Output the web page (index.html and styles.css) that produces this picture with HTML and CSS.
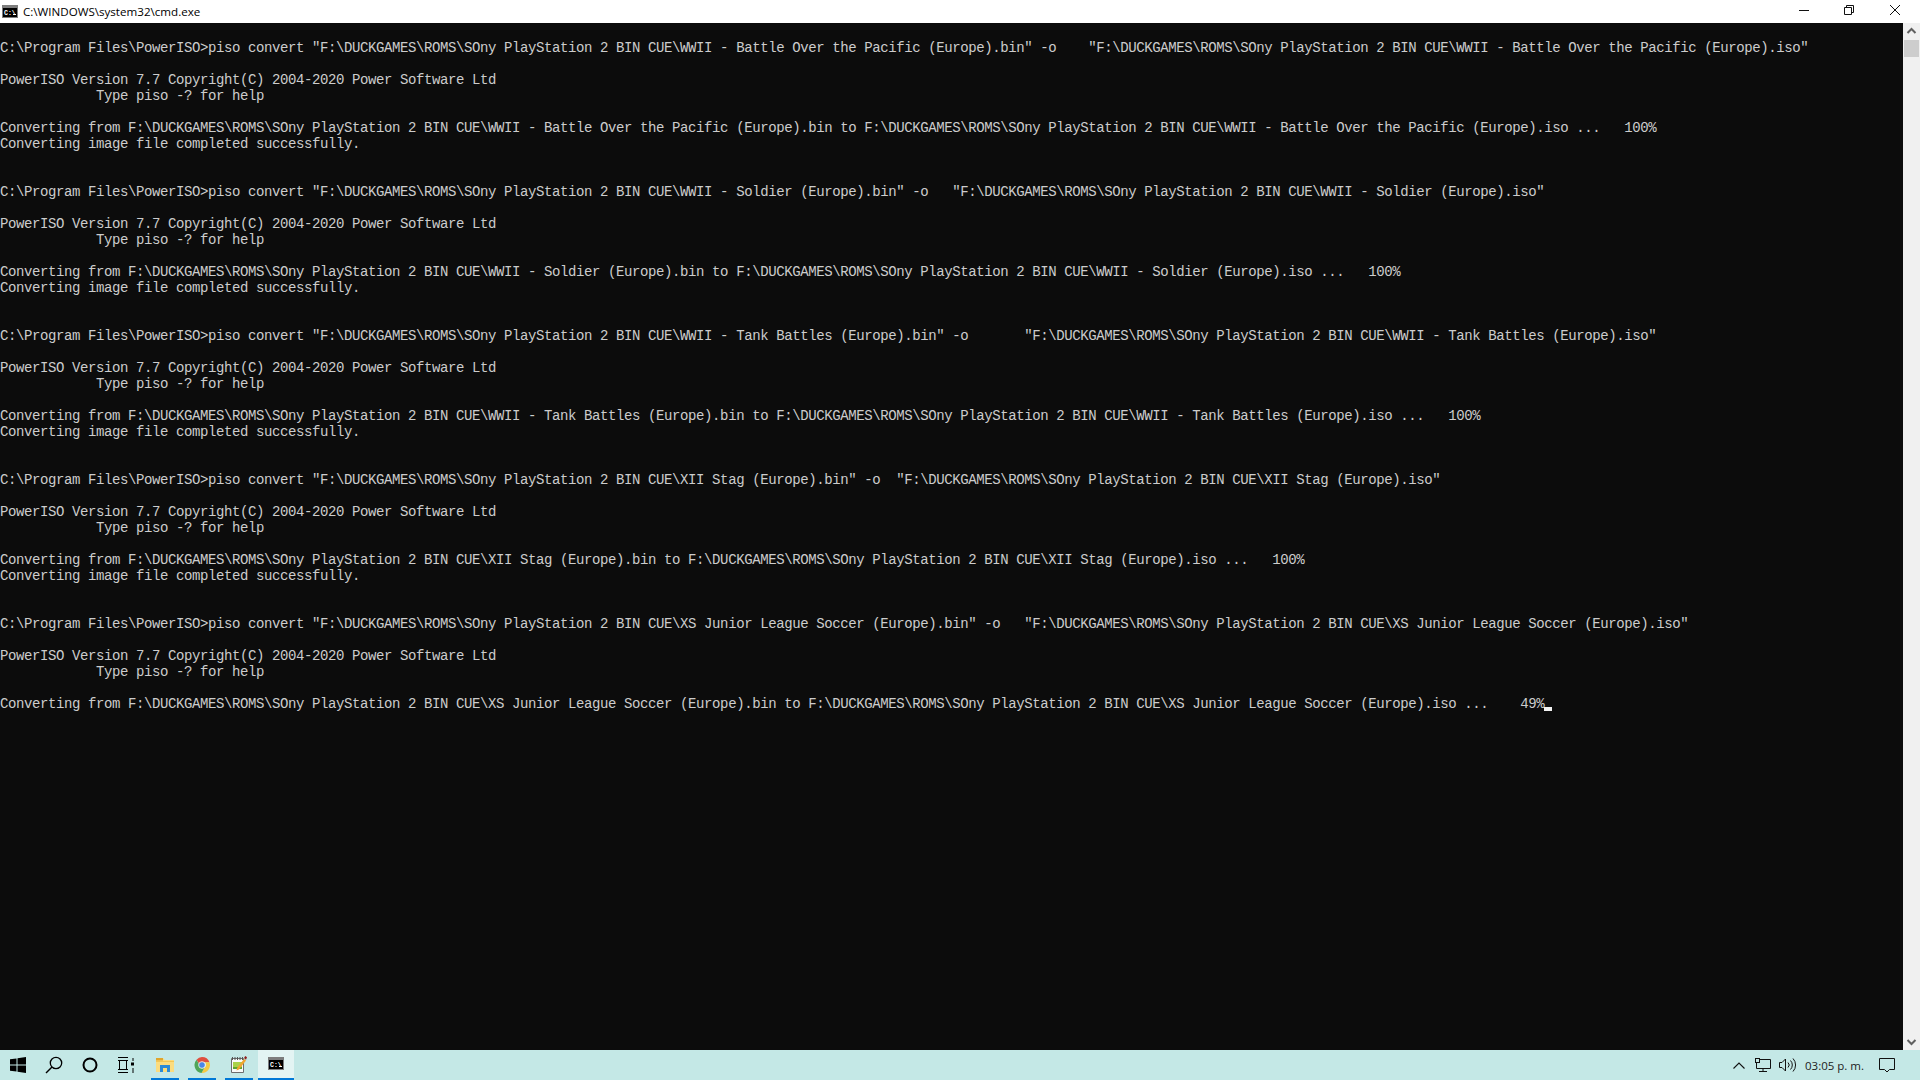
FILE: index.html
```html
<!DOCTYPE html>
<html lang="en">
<head>
<meta charset="utf-8">
<title>C:\WINDOWS\system32\cmd.exe</title>
<link rel="stylesheet" href="styles.css">
</head>
<body>
<div class="screen">
  <header class="titlebar">
    <svg class="app-icon" width="16" height="13" viewBox="0 0 16 13"><rect width="16" height="13" fill="#7d7d7d"/><rect x="1" y="3" width="14" height="9" fill="#000"/><text x="2" y="10" class="app-icon-text">C:\</text><rect x="11" y="9" width="3" height="1" fill="#fff"/></svg>
    <span class="title">C:\WINDOWS\system32\cmd.exe</span>
    <div class="window-controls">
      <svg class="ctl ctl-min" width="46" height="16" viewBox="0 0 46 16"><path d="M18 10.5h10" stroke="#111" fill="none"/></svg>
      <svg class="ctl ctl-max" width="46" height="16" viewBox="0 0 46 16"><path d="M17.5 7.500h7v7h-7zM19.500 7.500v-2h7v7h-2" stroke="#111" fill="none"/></svg>
      <svg class="ctl ctl-close" width="46" height="16" viewBox="0 0 46 16"><path d="M17 5l10 10M27 5l-10 10" stroke="#111" fill="none"/></svg>
    </div>
  </header>
  <main class="console">
<pre class="output">

C:\Program Files\PowerISO&gt;piso convert "F:\DUCKGAMES\ROMS\SOny PlayStation 2 BIN CUE\WWII - Battle Over the Pacific (Europe).bin" -o    "F:\DUCKGAMES\ROMS\SOny PlayStation 2 BIN CUE\WWII - Battle Over the Pacific (Europe).iso"

PowerISO Version 7.7 Copyright(C) 2004-2020 Power Software Ltd
            Type piso -? for help

Converting from F:\DUCKGAMES\ROMS\SOny PlayStation 2 BIN CUE\WWII - Battle Over the Pacific (Europe).bin to F:\DUCKGAMES\ROMS\SOny PlayStation 2 BIN CUE\WWII - Battle Over the Pacific (Europe).iso ...   100%
Converting image file completed successfully.


C:\Program Files\PowerISO&gt;piso convert "F:\DUCKGAMES\ROMS\SOny PlayStation 2 BIN CUE\WWII - Soldier (Europe).bin" -o   "F:\DUCKGAMES\ROMS\SOny PlayStation 2 BIN CUE\WWII - Soldier (Europe).iso"

PowerISO Version 7.7 Copyright(C) 2004-2020 Power Software Ltd
            Type piso -? for help

Converting from F:\DUCKGAMES\ROMS\SOny PlayStation 2 BIN CUE\WWII - Soldier (Europe).bin to F:\DUCKGAMES\ROMS\SOny PlayStation 2 BIN CUE\WWII - Soldier (Europe).iso ...   100%
Converting image file completed successfully.


C:\Program Files\PowerISO&gt;piso convert "F:\DUCKGAMES\ROMS\SOny PlayStation 2 BIN CUE\WWII - Tank Battles (Europe).bin" -o       "F:\DUCKGAMES\ROMS\SOny PlayStation 2 BIN CUE\WWII - Tank Battles (Europe).iso"

PowerISO Version 7.7 Copyright(C) 2004-2020 Power Software Ltd
            Type piso -? for help

Converting from F:\DUCKGAMES\ROMS\SOny PlayStation 2 BIN CUE\WWII - Tank Battles (Europe).bin to F:\DUCKGAMES\ROMS\SOny PlayStation 2 BIN CUE\WWII - Tank Battles (Europe).iso ...   100%
Converting image file completed successfully.


C:\Program Files\PowerISO&gt;piso convert "F:\DUCKGAMES\ROMS\SOny PlayStation 2 BIN CUE\XII Stag (Europe).bin" -o  "F:\DUCKGAMES\ROMS\SOny PlayStation 2 BIN CUE\XII Stag (Europe).iso"

PowerISO Version 7.7 Copyright(C) 2004-2020 Power Software Ltd
            Type piso -? for help

Converting from F:\DUCKGAMES\ROMS\SOny PlayStation 2 BIN CUE\XII Stag (Europe).bin to F:\DUCKGAMES\ROMS\SOny PlayStation 2 BIN CUE\XII Stag (Europe).iso ...   100%
Converting image file completed successfully.


C:\Program Files\PowerISO&gt;piso convert "F:\DUCKGAMES\ROMS\SOny PlayStation 2 BIN CUE\XS Junior League Soccer (Europe).bin" -o   "F:\DUCKGAMES\ROMS\SOny PlayStation 2 BIN CUE\XS Junior League Soccer (Europe).iso"

PowerISO Version 7.7 Copyright(C) 2004-2020 Power Software Ltd
            Type piso -? for help

Converting from F:\DUCKGAMES\ROMS\SOny PlayStation 2 BIN CUE\XS Junior League Soccer (Europe).bin to F:\DUCKGAMES\ROMS\SOny PlayStation 2 BIN CUE\XS Junior League Soccer (Europe).iso ...    49%<span class="cursor"></span></pre>
    <div class="scrollbar">
      <svg class="arrow" width="17" height="17" viewBox="0 0 17 17"><path d="M4.500 10l4-4 4 4" stroke="#606060" stroke-width="2" fill="none"/></svg>
      <div class="track"><div class="thumb"></div></div>
      <svg class="arrow" width="17" height="17" viewBox="0 0 17 17"><path d="M4.500 7l4 4 4-4" stroke="#606060" stroke-width="2" fill="none"/></svg>
    </div>
  </main>
  <footer class="taskbar">
    <div class="tool"><svg width="16" height="16" viewBox="0 0 16 16"><path d="M0 2.300 6.500 1.400V7.500H0zM7.500 1.200 16 0V7.500H7.500zM0 8.500H6.500V14.600L0 13.700zM7.500 8.500H16V16L7.500 14.800z" fill="#000"/></svg></div>
    <div class="tool"><svg width="18" height="18" viewBox="0 0 18 18"><circle cx="11" cy="7" r="5.700" stroke="#000" stroke-width="1.300" fill="none"/><path d="M7 11 1 17" stroke="#000" stroke-width="1.400" fill="none"/></svg></div>
    <div class="tool"><svg width="16" height="16" viewBox="0 0 16 16"><circle cx="8" cy="8" r="6.500" stroke="#000" stroke-width="2" fill="none"/></svg></div>
    <div class="tool"><svg width="16" height="16" viewBox="0 0 16 16"><path d="M0 .500h10M0 15.500h10M1.500 4v8M8.500 4v8M0 3.500h10M0 12.500h10M15 1v3M15 11v5" stroke="#000" fill="none"/><rect x="13" y="5.500" width="3" height="3" fill="#000"/></svg></div>
    <div class="apps">
      <div class="app pinned"><svg width="18" height="16" viewBox="0 0 18 16"><path d="M0 1h7l2 2h9v12H0z" fill="#fbdc7e"/><path d="M0 1h7v2.500H0z" fill="#e0a52c"/><path d="M0 4h18v1H0z" fill="#f3c655"/><path d="M4 15V8h10v7h-3v-4H7v4z" fill="#2b8ad6"/></svg></div>
      <div class="app pinned"><svg width="16" height="16" viewBox="0 0 16 16"><path d="M8 0a8 8 0 0 1 7.500 5.200H8a3 3 0 0 0-2.800 1.900L2.500 2.800A8 8 0 0 1 8 0z" fill="#df4f3f"/><path d="M15.500 5.200A8 8 0 0 1 7.500 16l3-5.500a3 3 0 0 0 .2-5.300z" fill="#f5c945"/><path d="M7.500 16A8 8 0 0 1 2.500 2.800l3 5.200a3 3 0 0 0 5 2.500z" fill="#4fa558"/><circle cx="8" cy="8" r="3" fill="#4a86e8"/><circle cx="8" cy="8" r="3.400" stroke="#f4f4f4" stroke-width=".8" fill="none"/></svg></div>
      <div class="app pinned"><svg width="16" height="17" viewBox="0 0 16 17"><path d="M.500 2.500h12v14h-12z" fill="#fafafa" stroke="#6e6e6e"/><path d="M2 6h9v7H2z" fill="#a9d24a"/><path d="M2 11h9v2H2z" fill="#5da52f"/><path d="M1.500 1v3M4 1v3M6.500 1v3M9 1v3M11.500 1v3" stroke="#555"/><path d="M6 12 13 3l2 1.500-7 9-2.500 1z" fill="#f0a530"/><path d="M13 2l1.300-2 1.700 1.300-1 2.500z" fill="#8f1f1f"/></svg></div>
      <div class="app active"><svg width="16" height="13" viewBox="0 0 16 13"><rect width="16" height="13" fill="#7d7d7d"/><rect x="1" y="3" width="14" height="9" fill="#000"/><text x="2" y="10" class="app-icon-text">C:\</text><rect x="11" y="9" width="3" height="1" fill="#fff"/></svg></div>
    </div>
    <div class="tray">
      <svg class="tray-chevron" width="12" height="7" viewBox="0 0 12 7"><path d="M.500 6.500 6 1l5.500 5.500" stroke="#111" stroke-width="1.100" fill="none"/></svg>
      <svg class="tray-net" width="16" height="14" viewBox="0 0 16 14"><path d="M1.500 1.500h14v9h-14zM8 10.500v3M4 13.500h8" stroke="#111" fill="none"/><rect x=".5" y=".5" width="4" height="4" fill="#c4e8e6" stroke="#111"/></svg>
      <svg class="tray-vol" width="17" height="14" viewBox="0 0 17 14"><path d="M.500 4.500h2.500l3.500-3.500v12L3 9.500H.500zM9 4.500a3.500 3.500 0 0 1 0 5M11.500 2.500a6.500 6.500 0 0 1 0 9M14 .5a9.500 9.500 0 0 1 0 13" stroke="#111" fill="none"/></svg>
      <span class="clock">03:05 p. m.</span>
      <svg class="tray-note" width="16" height="15" viewBox="0 0 16 15"><path d="M.500.500h15v11h-5l-2.500 2.500-2.500-2.500h-5z" stroke="#111" fill="none"/></svg>
    </div>
  </footer>
</div>
</body>
</html>
```
FILE: styles.css
```css
html, body { margin: 0; padding: 0; background: #0c0c0c; }
.screen { display: flex; flex-direction: column; width: 1920px; height: 1080px; overflow: hidden; }

.titlebar { flex: 0 0 23px; display: flex; align-items: center; background: #fff; padding-left: 2px; }
.app-icon { margin-right: 5px; }
.app-icon-text { font: bold 6.500px "Liberation Mono", monospace; fill: #fff; }
.title { font: 11.600px "Open Sans", "Noto Sans", sans-serif; color: #000; white-space: nowrap; }
.window-controls { margin-left: auto; display: flex; align-self: flex-start; margin-right: 1px; }
.ctl { display: block; }

.console { flex: 1 1 auto; min-height: 0; display: flex; background: #0c0c0c; }
.output { flex: 1 1 auto; margin: 0; padding: 1px 0 0; overflow: hidden; color: #cccccc;
  font-family: "Liberation Mono", monospace; font-size: 14px; letter-spacing: -0.4px;
  line-height: 16px; white-space: pre; }
.cursor { display: inline-block; width: 8px; height: 15px; vertical-align: top;
  background: linear-gradient(transparent 11px, #f2f2f2 11px); }

.scrollbar { flex: 0 0 17px; display: flex; flex-direction: column; background: #f0f0f0; }
.arrow { display: block; flex: 0 0 17px; }
.track { flex: 1 1 auto; padding: 0 1px; }
.thumb { height: 17px; background: #cdcdcd; }

.taskbar { flex: 0 0 30px; display: flex; align-items: center; background: #c4e8e6; }
.tool { flex: 0 0 36px; height: 30px; display: flex; align-items: center; justify-content: center; }
.apps { display: flex; gap: 1px; margin-left: 3px; height: 30px; }
.app { width: 36px; height: 30px; box-sizing: border-box; display: flex; align-items: center; justify-content: center; padding-bottom: 1px; }
.app.pinned { background: linear-gradient(#0078d7, #0078d7) 4px 100% / 28px 2px no-repeat; }
.app.active { background: #e3f4f3; border-bottom: 2px solid #0078d7; }

.tray { margin-left: auto; display: flex; align-items: center; height: 30px; padding-right: 25px; }
.tray-chevron { margin-right: 10px; }
.tray-net { margin-right: 8px; }
.tray-vol { margin-right: 9px; }
.clock { font: 11.500px "Open Sans", "Noto Sans", sans-serif; color: #222; width: 74px; white-space: nowrap; }
```
